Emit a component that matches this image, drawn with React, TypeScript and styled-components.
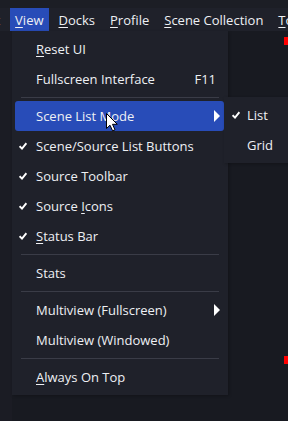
import React from "react";
import styled, { createGlobalStyle } from "styled-components";

const GlobalStyle = createGlobalStyle`
  html, body { margin: 0; padding: 0; background: #191b22; }
  body { font-family: "Open Sans", "Noto Sans", sans-serif; }
  #root { width: 288px; height: 421px; }
`;

const Page = styled.div`
  position: relative;
  width: 288px;
  height: 421px;
  overflow: hidden;
  background: #191b22;
  display: flex;
  flex-direction: column;
`;

const TopStrip = styled.div`
  height: 8px;
  background: #1c1e25;
`;

const MenuBar = styled.div`
  height: 23px;
  background: #1f212a;
  display: flex;
  align-items: stretch;
  gap: 5px;
  margin-left: -28px;
  white-space: nowrap;
`;

const BarItem = styled.div<{ $active?: boolean }>`
  display: flex;
  align-items: center;
  padding: 0 5px;
  font-size: 13px;
  color: #eef0f4;
  background: ${(p) => (p.$active ? "#284cb8" : "transparent")};
`;

const U = styled.span`
  text-decoration: underline;
  text-underline-offset: 2px;
`;

const Content = styled.div`
  flex: 1;
  display: flex;
`;

const Gutter = styled.div`
  width: 12px;
  background: #1b1c24;
`;

const Preview = styled.div`
  flex: 1;
  position: relative;
  background: #181a21;
`;

const Handle = styled.div<{ $top: number }>`
  position: absolute;
  right: 0;
  top: ${(p) => p.$top}px;
  width: 4px;
  height: 8px;
  background: #ff0000;
`;

const Popup = styled.div<{ $left: number; $top: number; $width: number }>`
  position: absolute;
  left: ${(p) => p.$left}px;
  top: ${(p) => p.$top}px;
  width: ${(p) => p.$width}px;
  background: #1f212a;
  padding: 3px 0 3px;
  display: flex;
  flex-direction: column;
  box-shadow: 1px 1px 3px rgba(0, 0, 0, 0.25);
`;

const SubPopup = styled(Popup)`
  padding: 3px 0;
`;

const Item = styled.div<{ $active?: boolean; $indent: number }>`
  position: relative;
  height: 30px;
  margin: 0 4px 0 3px;
  padding-left: ${(p) => p.$indent}px;
  padding-right: 8px;
  border-radius: 3px;
  display: flex;
  align-items: center;
  font-size: 13px;
  color: #eef0f4;
  white-space: nowrap;
  background: ${(p) => (p.$active ? "#284cb8" : "transparent")};
`;

const Label = styled.span`
  flex: 1;
`;

const Shortcut = styled.span`
  font-size: 13px;
  color: #eef0f4;
`;

const CheckBox = styled.span<{ $left: number }>`
  position: absolute;
  left: ${(p) => p.$left}px;
  top: 11px;
  width: 8px;
  height: 8px;
  display: flex;
`;

const Arrow = styled.span`
  width: 0;
  height: 0;
  border-top: 6px solid transparent;
  border-bottom: 6px solid transparent;
  border-left: 6px solid #ffffff;
  margin-right: -4px;
`;

const Separator = styled.div`
  height: 7px;
  display: flex;
  align-items: center;
  margin: 0 9px;
  &::after {
    content: "";
    flex: 1;
    height: 1px;
    background: #3a3c47;
  }
`;

const Cursor = styled.svg`
  position: absolute;
  left: 106px;
  top: 113px;
`;

const Check = () => (
  <svg width="8" height="8" viewBox="0 0 8 8">
    <path d="M0.6 4.2 L3 6.6 L7.4 1.2" fill="none" stroke="#ffffff" strokeWidth="1.9" />
  </svg>
);

type Entry =
  | { sep: true }
  | {
      sep?: false;
      label: React.ReactNode;
      checked?: boolean;
      shortcut?: string;
      sub?: boolean;
      active?: boolean;
    };

const entries: Entry[] = [
  { label: <><U>R</U>eset UI</> },
  { label: "Fullscreen Interface", shortcut: "F11" },
  { sep: true },
  { label: "Scene List Mode", sub: true, active: true },
  { label: "Scene/Source List Buttons", checked: true },
  { label: "Source Toolbar", checked: true },
  { label: <>Source <U>I</U>cons</>, checked: true },
  { label: <><U>S</U>tatus Bar</>, checked: true },
  { sep: true },
  { label: "Stats" },
  { sep: true },
  { label: "Multiview (Fullscreen)", sub: true },
  { label: "Multiview (Windowed)" },
  { sep: true },
  { label: <><U>A</U>lways On Top</> },
];

export default function App() {
  return (
    <>
      <GlobalStyle />
      <Page>
        <TopStrip />
        <MenuBar>
          <BarItem>Edit</BarItem>
          <BarItem $active><U>V</U>iew</BarItem>
          <BarItem><U>D</U>ocks</BarItem>
          <BarItem><U>P</U>rofile</BarItem>
          <BarItem><U>S</U>cene Collection</BarItem>
          <BarItem><U>T</U>ools</BarItem>
        </MenuBar>
        <Content>
          <Gutter />
          <Preview>
            <Handle $top={6} />
            <Handle $top={325} />
          </Preview>
        </Content>

        <Popup $left={12} $top={31} $width={216}>
          {entries.map((e, i) =>
            e.sep ? (
              <Separator key={i} />
            ) : (
              <Item key={i} $active={e.active} $indent={21}>
                {e.checked && (
                  <CheckBox $left={4}>
                    <Check />
                  </CheckBox>
                )}
                <Label>{e.label}</Label>
                {e.shortcut && <Shortcut>{e.shortcut}</Shortcut>}
                {e.sub && <Arrow />}
              </Item>
            )
          )}
        </Popup>

        <SubPopup $left={224} $top={97} $width={70}>
          <Item $indent={20}>
            <CheckBox $left={5}>
              <Check />
            </CheckBox>
            <Label>List</Label>
          </Item>
          <Item $indent={20}>
            <Label>Grid</Label>
          </Item>
        </SubPopup>

        <Cursor width="13" height="19" viewBox="0 0 13 19">
          <path
            d="M0.5 0.5 L0.5 15.5 L4 12.2 L6.6 17.8 L9 16.8 L6.5 11.3 L11.3 11.3 Z"
            fill="#ffffff"
            stroke="#000000"
            strokeWidth="1"
            strokeLinejoin="round"
          />
        </Cursor>
      </Page>
    </>
  );
}
